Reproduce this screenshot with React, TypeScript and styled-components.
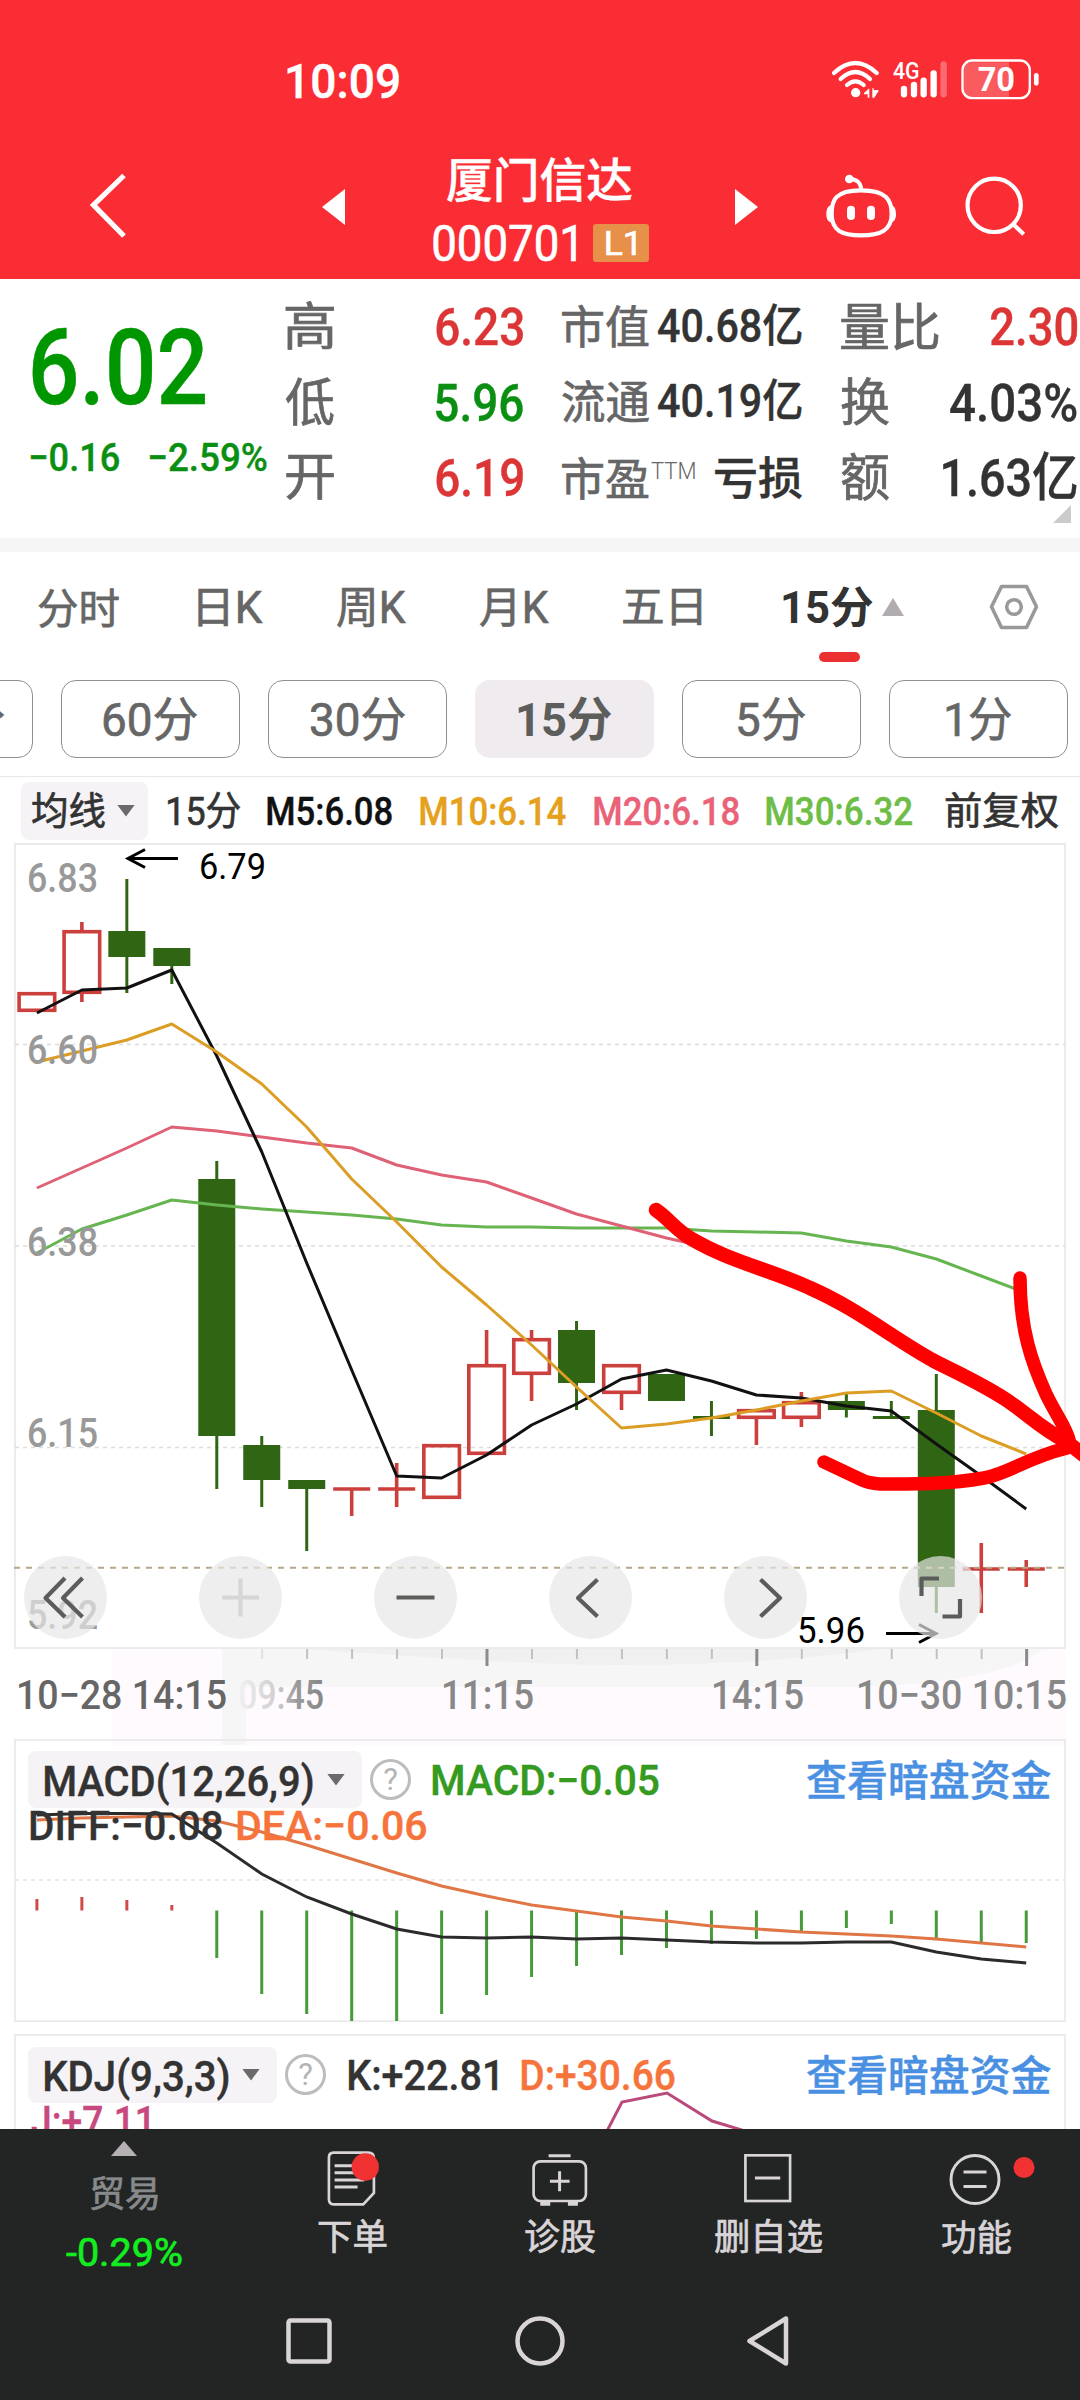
import React, { useLayoutEffect, useRef, useState } from 'react';
import styled, { createGlobalStyle } from 'styled-components';

const FONT = `Roboto, 'Noto Sans CJK SC', 'Noto Sans', sans-serif`;
const CAP = 0.711;

const Global = createGlobalStyle`
  * { box-sizing: border-box; }
  html, body { margin: 0; padding: 0; background: #fff; }
  body { font-family: ${FONT}; }
  button { font-family: ${FONT}; }
  svg { display: block; flex: none; }
  svg text { font-family: ${FONT}; }
`;

/* ---------- condensed text ---------- */

type TextProps = {
  children: string;
  w: number;
  h: number;
  size?: number;
  weight?: number;
  color?: string;
  ml?: number;
  mt?: number;
};

const TextBox = styled.span<{ $w: number; $h: number; $ml: number; $mt: number }>`
  display: block;
  flex: none;
  width: ${p => p.$w}px;
  height: ${p => p.$h}px;
  margin-left: ${p => p.$ml}px;
  margin-top: ${p => p.$mt}px;
`;

const TextInk = styled.span<{ $size: number; $h: number; $weight: number; $color: string }>`
  display: inline-block;
  white-space: pre;
  font-size: ${p => p.$size}px;
  line-height: ${p => p.$h}px;
  height: ${p => p.$h}px;
  font-weight: ${p => p.$weight};
  color: ${p => p.$color};
  -webkit-text-stroke: ${p => (p.$weight === 400 ? 0.7 : p.$weight === 500 ? 0.4 : 0)}px ${p => p.$color};
  transform-origin: 0 0;
`;

/* Without a size, h is the cap height and the baseline sits on the box's lower edge. */
function Text({ children, w, h, size, weight = 500, color = '#333', ml = 0, mt = 0 }: TextProps) {
  const ref = useRef<HTMLSpanElement>(null);
  const [transform, setTransform] = useState('none');
  const fontSize = size ?? h / CAP;
  useLayoutEffect(() => {
    const ctx = document.createElement('canvas').getContext('2d');
    if (!ctx || !ref.current) return;
    ctx.font = `${weight} ${fontSize}px ${FONT}`;
    const m = ctx.measureText(children);
    const sx = w / (m.actualBoundingBoxLeft + m.actualBoundingBoxRight);
    const baseline = h / 2 + (m.fontBoundingBoxAscent - m.fontBoundingBoxDescent) / 2;
    const inkH = m.actualBoundingBoxAscent + m.actualBoundingBoxDescent;
    const target = size ? (h - inkH) / 2 + m.actualBoundingBoxAscent : h;
    setTransform(`translate(${m.actualBoundingBoxLeft * sx}px, ${target - baseline}px) scaleX(${sx})`);
  }, [children, w, h, fontSize, weight, size]);
  return (
    <TextBox $w={w} $h={h} $ml={ml} $mt={mt}>
      <TextInk ref={ref} $size={fontSize} $h={h} $weight={weight} $color={color} style={{ transform }}>
        {children}
      </TextInk>
    </TextBox>
  );
}

/* ---------- layout parts ---------- */

const Screen = styled.div`
  width: 1080px;
  height: 2400px;
  overflow: hidden;
  background: #fff;
  display: flex;
  flex-direction: column;
`;

const Header = styled.header`
  flex: none;
  height: 279px;
  background: #f92d33;
`;

const StatusBar = styled.div`
  height: 152px;
  padding: 59px 41px 0 287px;
  display: flex;
  justify-content: space-between;
  align-items: flex-start;
`;

const TitleBar = styled.div`
  height: 108px;
  padding-left: 90px;
  display: flex;
  align-items: center;
`;

const TitleBlock = styled.div`
  width: 216px;
  height: 105px;
  margin: 7px 86px 0 88px;
  display: flex;
  flex-direction: column;
  justify-content: space-between;
`;

const CodeRow = styled.div`
  display: flex;
  align-items: center;
  justify-content: space-between;
`;

const LevelBadge = styled.span`
  width: 56px;
  height: 38px;
  border-radius: 3px;
  background: #e6904a;
  display: flex;
  align-items: center;
  justify-content: center;
`;

const Arrow = styled.span<{ $dir: 'left' | 'right' | 'up' | 'down'; $w: number; $h: number; $color: string; $ml?: number; $mt?: number }>`
  flex: none;
  width: ${p => p.$w}px;
  height: ${p => p.$h}px;
  margin-left: ${p => p.$ml ?? 0}px;
  margin-top: ${p => p.$mt ?? 0}px;
  background: ${p => p.$color};
  clip-path: ${p =>
    ({
      left: 'polygon(0 50%, 100% 0, 100% 100%)',
      right: 'polygon(0 0, 100% 50%, 0 100%)',
      up: 'polygon(50% 0, 100% 100%, 0 100%)',
      down: 'polygon(0 0, 100% 0, 50% 100%)',
    })[p.$dir]};
`;

const Quote = styled.section`
  flex: none;
  position: relative;
  height: 259px;
  display: flex;
`;

const PriceBlock = styled.div`
  width: 286px;
  padding: 50px 0 0 32px;
`;

const ChangeRow = styled.div`
  display: flex;
  justify-content: space-between;
  width: 236px;
  margin: 39px 0 0 -1px;
`;

const Stats = styled.div`
  padding-top: 9px;
  display: grid;
  grid-template-columns: 237px 240px 236px;
  grid-template-rows: repeat(3, 75.7px);
  column-gap: 39px;
`;

const Stat = styled.div`
  display: flex;
  align-items: center;
  justify-content: space-between;
`;

const StatName = styled.span`
  display: flex;
`;

const Corner = styled.span`
  position: absolute;
  right: 9px;
  bottom: 15px;
  width: 18px;
  height: 18px;
  background: #cbcbcb;
  clip-path: polygon(100% 0, 100% 100%, 0 100%);
`;

const Divider = styled.div`
  flex: none;
  height: 14px;
  background: #f6f6f6;
`;

const Tabs = styled.nav`
  flex: none;
  height: 110px;
  padding-left: 38px;
  display: flex;
  align-items: center;
  gap: 74px;
`;

const ActiveTab = styled.div`
  position: relative;
  display: flex;
  align-items: center;
  margin-left: 8px;
  &::after {
    content: '';
    position: absolute;
    left: 36px;
    top: 60px;
    width: 41px;
    height: 10px;
    border-radius: 5px;
    background: #ec3030;
  }
`;

const Periods = styled.div`
  flex: none;
  margin-top: 18px;
  height: 78px;
  display: flex;
  gap: 28px;
  overflow: hidden;
`;

const Period = styled.button<{ $active?: boolean; $first?: boolean }>`
  flex: none;
  width: 179px;
  height: 78px;
  padding: 0;
  margin-left: ${p => (p.$first ? -146 : 0)}px;
  border: ${p => (p.$active ? 'none' : '1px solid #8f8f8f')};
  border-radius: 15px;
  background: ${p => (p.$active ? '#efebef' : '#fff')};
  display: flex;
  align-items: center;
  justify-content: center;
`;

const Legend = styled.div`
  flex: none;
  margin-top: 18px;
  height: 68px;
  border-top: 1px solid #e8e8e8;
  padding-left: 21px;
  display: flex;
  align-items: center;
`;

const Chip = styled.div<{ $w: number; $h: number; $pad: number }>`
  flex: none;
  width: ${p => p.$w}px;
  height: ${p => p.$h}px;
  padding-left: ${p => p.$pad}px;
  border-radius: 8px;
  background: #f6f3f7;
  display: flex;
  align-items: center;
`;

const ChartArea = styled.section`
  flex: none;
  position: relative;
  height: 895px;
  svg { overflow: visible; }
`;

const Controls = styled.div`
  position: absolute;
  left: 24px;
  top: 712px;
  width: 958px;
  display: flex;
  justify-content: space-between;
`;

const RoundButton = styled.button`
  width: 83px;
  height: 83px;
  padding: 0;
  border: none;
  border-radius: 50%;
  background: rgba(231, 231, 231, 0.69);
  display: flex;
  align-items: center;
  justify-content: center;
`;

const Overlay = styled.svg`
  position: absolute;
  left: 0;
  top: 0;
`;

const Panel = styled.section<{ $h: number; $gap?: number }>`
  flex: none;
  position: relative;
  height: ${p => p.$h}px;
  margin-top: ${p => p.$gap ?? 0}px;
  overflow: hidden;
`;

const PanelHead = styled.div`
  position: relative;
  display: flex;
  align-items: center;
  height: 55px;
  margin: 13px 29px 0 28px;
`;

const Help = styled.span`
  flex: none;
  width: 41px;
  height: 41px;
  margin-left: 8px;
  border: 3px solid #bdbdbd;
  border-radius: 50%;
  color: #b4b4b4;
  font-size: 31px;
  line-height: 36px;
  text-align: center;
`;

const PanelLink = styled.a`
  margin-left: auto;
`;

const PanelSub = styled.div<{ $pad: number }>`
  position: relative;
  display: flex;
  gap: 16px;
  padding: 4px 0 0 ${p => p.$pad}px;
`;

const BottomBar = styled.footer`
  flex: none;
  height: 271px;
  background: #222523;
`;

const NavRow = styled.nav`
  height: 157px;
  display: grid;
  grid-template-columns: 248px 208px 208px 208px 208px;
`;

const NavItem = styled.div`
  position: relative;
  display: flex;
  flex-direction: column;
  align-items: center;
  padding-top: 22px;
`;

const IndexItem = styled(NavItem)`
  padding-top: 12px;
`;

const IconSlot = styled.div`
  height: 58px;
  margin-bottom: 11px;
`;

const SystemRow = styled.div`
  display: flex;
  align-items: center;
  height: 110px;
  padding-left: 286px;
`;

/* ---------- chart data ---------- */

const X0 = 36.9;
const STEP = 44.97;
const cx = (i: number) => X0 + STEP * i;
const path = (ys: number[]) => ys.map((y, i) => `${i ? 'L' : 'M'}${cx(i).toFixed(1)} ${y}`).join('');

type Candle = [up: boolean, high: number, top: number, bottom: number, low: number];
const candles: Candle[] = [
  [true, 992, 992, 1012, 1012],
  [true, 922, 930, 994, 1002],
  [false, 879, 931, 957, 993],
  [false, 948, 948, 966, 984],
  [false, 1161, 1179, 1436, 1489],
  [false, 1436, 1445, 1480, 1507],
  [false, 1480, 1480, 1489, 1551],
  [true, 1489, 1489, 1489, 1516],
  [true, 1463, 1489, 1489, 1507],
  [true, 1444, 1444, 1499, 1499],
  [true, 1330, 1364, 1455, 1455],
  [true, 1330, 1338, 1375, 1401],
  [false, 1321, 1330, 1383, 1410],
  [true, 1364, 1364, 1394, 1410],
  [false, 1374, 1374, 1401, 1401],
  [false, 1401, 1417.5, 1417.5, 1436],
  [true, 1409, 1409, 1419, 1445],
  [true, 1392, 1401, 1419, 1427],
  [false, 1394, 1401, 1410, 1417.5],
  [false, 1401, 1417.5, 1417.5, 1417.5],
  [false, 1374, 1410, 1587, 1613],
  [true, 1543, 1569, 1569, 1613],
  [true, 1560, 1569, 1569, 1587],
];

const averages = [
  { color: '#66b550', ys: [1253, 1229, 1215, 1200, 1205, 1209, 1212, 1215, 1219, 1225, 1227, 1227, 1228, 1228, 1228, 1231, 1232, 1233, 1241, 1247, 1259, 1276, 1293] },
  { color: '#df6175', ys: [1188, 1168, 1148, 1127, 1131, 1137, 1143, 1148, 1165, 1175, 1182, 1198, 1214, 1226, 1238, 1248, 1267, 1289, 1305] },
  { color: '#111111', ys: [1013, 990, 988, 970, 1056, 1152, 1263, 1370, 1476, 1478, 1455, 1425, 1404, 1379, 1370, 1381, 1395, 1398, 1406, 1411, 1444, 1476, 1509] },
  { color: '#dc9d24', ys: [1062, 1051, 1040, 1024, 1052, 1084, 1127, 1179, 1222, 1267, 1305, 1345, 1387, 1428, 1424, 1418, 1410, 1401, 1393, 1391, 1413, 1436, 1454] },
];

const macdBars = [1899, 1897, 1900, 1905, 1958, 1994, 2014, 2021, 2021, 2014, 1995, 1977, 1966, 1955, 1948, 1944, 1939, 1931, 1928, 1924, 1939, 1942, 1943];
const diff = [1815, 1813.5, 1813.5, 1814, 1843, 1874, 1897, 1914, 1929, 1937, 1938, 1937, 1939, 1938, 1940, 1942, 1943, 1943, 1942, 1942, 1952, 1959, 1963];
const dea = [1820, 1818, 1817, 1816, 1821, 1832, 1845, 1859, 1873, 1886, 1896, 1905, 1911, 1917, 1921, 1926, 1929, 1932, 1934, 1936, 1939, 1943, 1947];

const RED = '#cb3f3c';
const GREEN = '#306613';

function CandleMark({ i, c }: { i: number; c: Candle }) {
  const [up, high, top, bottom, low] = c;
  const x = cx(i);
  const color = up ? RED : GREEN;
  const flat = top === bottom;
  return (
    <g stroke={color} strokeWidth={up ? 3.6 : 3} fill="none">
      {high < top && <path d={`M${x} ${high}V${top}`} />}
      {low > bottom && <path d={`M${x} ${bottom}V${low}`} />}
      {flat && <path d={`M${x - 18.5} ${top}H${x + 18.5}`} />}
      {!flat && up && <rect x={x - 17.8} y={top + 1.7} width={35.6} height={bottom - top - 3.4} />}
      {!flat && !up && <rect x={x - 18.5} y={top} width={37} height={bottom - top} fill={color} stroke="none" />}
    </g>
  );
}

type LabelProps = { x: number; y: number; w: number; size: number; fill: string; weight?: number; children: string };
function Label({ x, y, w, size, fill, weight = 400, children }: LabelProps) {
  return (
    <text x={x} y={y} fontSize={size} fontWeight={weight} fill={fill} textLength={w} lengthAdjust="spacingAndGlyphs">
      {children}
    </text>
  );
}

function MainChart() {
  return (
    <svg width="1080" height="906" viewBox="0 844 1080 906">
      <defs>
        <linearGradient id="timeFade" x1="240" x2="322" y1="0" y2="0" gradientUnits="userSpaceOnUse">
          <stop offset="0" stopColor="#f0f0f0" />
          <stop offset="0.45" stopColor="#cfcdcf" />
          <stop offset="0.7" stopColor="#999" />
          <stop offset="1" stopColor="#888" />
        </linearGradient>
      </defs>
      <rect x="112" y="1649" width="953" height="97" fill="#fefafe" />
      <path d="M222 1649H1042C1022 1668 960 1687 830 1687H246V1745H222Z" fill="#f6f6f6" />
      <path d="M300 1649H880C800 1660 690 1668 560 1664C460 1660 380 1654 300 1649Z" fill="#f1f0f1" />
      <path d="M15 844V1648H1065V844Z" fill="#fff" stroke="#ebebeb" strokeWidth="2" />
      <g stroke="#dcdcdc" strokeWidth="1.4" strokeDasharray="4 4">
        <path d="M15 1044.5H1065M15 1246H1065M15 1447.5H1065" />
      </g>
      {candles.map((c, i) => (
        <CandleMark key={i} i={i} c={c} />
      ))}
      <path d="M14 1567.8H1065" stroke="#b6a886" strokeWidth="2" strokeDasharray="6 6" />
      {averages.map(a => (
        <path key={a.color} d={path(a.ys)} stroke={a.color} strokeWidth="3" fill="none" strokeLinejoin="round" />
      ))}
      <Label x={27} y={892} w={71} size={40} fill="#999" weight={500}>6.83</Label>
      <Label x={27} y={1064} w={71} size={40} fill="#999" weight={500}>6.60</Label>
      <Label x={27} y={1256} w={71} size={40} fill="#999" weight={500}>6.38</Label>
      <Label x={27} y={1447} w={71} size={40} fill="#999" weight={500}>6.15</Label>
      <Label x={27} y={1629} w={71} size={40} fill="#999" weight={500}>5.92</Label>
      <Label x={199} y={879} w={67} size={36.5} fill="#000">6.79</Label>
      <Label x={797} y={1643} w={68} size={36.5} fill="#000">5.96</Label>
      <path d="M178 858.5H128M145 849.5L128 858.5L145 867.5M886 1633.5H936M919 1624.5L936 1633.5L919 1642.5" stroke="#000" strokeWidth="3" fill="none" />
      {candles.slice(5).map((_, k) => {
        const i = k + 5;
        const major = i === 10 || i === 16 || i === 22;
        return <path key={i} d={`M${cx(i) + 0.4} 1649V${major ? 1666 : 1659}`} stroke={major ? '#8a8a8a' : i === 5 ? '#e0e0e0' : '#c2c0c2'} strokeWidth={major ? 3 : 2} />;
      })}
      <Label x={16} y={1709} w={211} size={40} fill="#666" weight={500}>10−28 14:15</Label>
      <Label x={238} y={1709} w={86} size={40} fill="url(#timeFade)" weight={500}>09:45</Label>
      <Label x={441} y={1709} w={93} size={40} fill="#888" weight={500}>11:15</Label>
      <Label x={711} y={1709} w={93} size={40} fill="#888" weight={500}>14:15</Label>
      <Label x={856} y={1709} w={211} size={40} fill="#888" weight={500}>10−30 10:15</Label>
    </svg>
  );
}

function Stroke() {
  return (
    <Overlay width="1080" height="895" viewBox="0 844 1080 895">
      <g fill="none" stroke="#ff0000" strokeWidth="13.5" strokeLinecap="round" strokeLinejoin="round">
        <path d="M656 1210C668 1218 676 1230 690 1238C730 1262 772 1270 810 1288C860 1310 895 1340 936 1362C960 1374 982 1384 1005 1399C1028 1414 1040 1428 1067 1442L1086 1457" strokeWidth="14.5" />
        <path d="M1020 1278C1020 1330 1032 1363 1046 1394C1056 1415 1066 1427 1069 1440" />
        <path d="M824 1462L862 1480Q868 1483 880 1484C920 1484 950 1484 984 1478C1010 1473 1026 1458 1067 1448" />
      </g>
    </Overlay>
  );
}

const ControlGlyph = ({ d, color = '#5c5d5b' }: { d: string; color?: string }) => (
  <svg width="83" height="83" viewBox="0 0 83 83">
    <path d={d} fill="none" stroke={color} strokeWidth="4.2" strokeLinejoin="round" />
  </svg>
);

const glyphs = [
  { d: 'M41 22L21.5 42L41 61M58.5 22L39 42L58.5 61' },
  { d: 'M23 41.5H60M41.5 22.5V60.5', color: '#d6d6d6' },
  { d: 'M22.5 41.5H60.5' },
  { d: 'M48.5 23.5L29 42L48.5 60.5' },
  { d: 'M36.5 23.5L56 42L36.5 60.5' },
  { d: 'M40 22.5H22.5V40M43.5 60.5H61V43' },
];

export default function App() {
  return (
    <>
      <Global />
      <Screen>
        <Header>
          <StatusBar>
            <Text w={112} h={34} mt={5} color="#fff" weight={500}>10:09</Text>
            <svg width="207.3" height="40.7" viewBox="96 56 622 122">
              <g fill="none" stroke="#fff" strokeWidth="12.5" strokeLinecap="round">
                <path d="M102 98Q166 38 230 98" />
                <path d="M122 116Q166 74 210 116" />
                <path d="M141 134Q166 112 191 134" />
              </g>
              <circle cx="167" cy="157" r="14" fill="#fff" />
              <path d="M192 158L208 144V172H203V162H192ZM217 144H221V149L237 150L223 172H217Z" fill="#fff" />
              <text x="279" y="116" fontSize="73" fontWeight="500" fill="#fff" textLength="80" lengthAdjust="spacingAndGlyphs">4G</text>
              <g stroke="#fff" strokeWidth="19" strokeLinecap="round">
                <path d="M312 146V162M342 134V162M371 121V162M401 99V162" />
                <path d="M431 72V162" opacity="0.3" />
              </g>
              <path d="M627 66H514Q490 66 490 90V146Q490 170 514 170H627Z" fill="#fff" opacity="0.22" />
              <rect x="487.5" y="60.5" width="202" height="113" rx="29" fill="none" stroke="#fff" strokeWidth="7" />
              <rect x="702" y="98" width="14" height="38" rx="7" fill="#fff" />
              <text x="533" y="153" fontSize="101" fontWeight="700" fill="#fff" textLength="112" lengthAdjust="spacingAndGlyphs">70</text>
            </svg>
          </StatusBar>
          <TitleBar>
            <svg width="38" height="66" viewBox="0 0 38 66">
              <path d="M34 2.5L3.5 32L34 63" fill="none" stroke="#fff" strokeWidth="5.2" />
            </svg>
            <Arrow $dir="left" $w={23} $h={36} $color="#fff" $ml={194} $mt={2} />
            <TitleBlock>
              <Text w={185} h={44} size={47} ml={14} mt={1} color="#fff" weight={500}>厦门信达</Text>
              <CodeRow>
                <Text w={143} h={35} color="#fff" weight={400}>000701</Text>
                <LevelBadge>
                  <Text w={30} h={23} color="#fff" weight={400}>L1</Text>
                </LevelBadge>
              </CodeRow>
            </TitleBlock>
            <Arrow $dir="right" $w={23} $h={36} $color="#fff" $mt={2} />
            <svg width="138" height="64" viewBox="-126 400 414 192">
              <g fill="none" stroke="#fff" strokeWidth="12.5">
                <path d="M183 449C262 449 275 480 275 520C275 570 240 584 183 584C126 584 95 570 95 520C95 480 104 449 183 449Z" />
                <path d="M184 448C182 425 172 416 150 415" />
              </g>
              <circle cx="148" cy="415" r="13" fill="#fff" />
              <path d="M96 493C86 494 79 502 79 520S86 545 97 546ZM271 493C281 494 288 502 288 520S281 545 270 546Z" fill="#fff" />
              <rect x="141" y="495" width="24" height="43" rx="12" fill="#fff" />
              <rect x="201" y="495" width="24" height="43" rx="12" fill="#fff" />
            </svg>
            <svg width="129.7" height="60.7" viewBox="289 408 389 182">
              <circle cx="583.5" cy="496" r="80" fill="none" stroke="#fff" strokeWidth="12.5" />
              <path d="M638 550L672 583" stroke="#fff" strokeWidth="12.5" />
            </svg>
          </TitleBar>
        </Header>

        <Quote>
          <PriceBlock>
            <Text w={173} h={75} color="#009600" weight={500}>6.02</Text>
            <ChangeRow>
              <Text w={88} h={28} color="#0b8f12" weight={500}>−0.16</Text>
              <Text w={117} h={28} color="#0b8f12" weight={500}>−2.59%</Text>
            </ChangeRow>
          </PriceBlock>
          <Stats>
            <Stat>
              <Text w={48} h={48} size={51} weight={400} color="#666">高</Text>
              <Text w={87} h={37} mt={1} color="#dc3535">6.23</Text>
            </Stat>
            <Stat>
              <Text w={87} h={43} size={45} weight={400} color="#666">市值</Text>
              <Text w={144} h={32.5}>40.68亿</Text>
            </Stat>
            <Stat>
              <Text w={98} h={46} size={51} weight={400} color="#666">量比</Text>
              <Text w={86} h={37} mt={1} color="#dc3535">2.30</Text>
            </Stat>
            <Stat>
              <Text w={48} h={48} size={51} weight={400} color="#666">低</Text>
              <Text w={87} h={37} mt={1} color="#0b8f12">5.96</Text>
            </Stat>
            <Stat>
              <Text w={87} h={43} size={45} weight={400} color="#666">流通</Text>
              <Text w={144} h={32.5}>40.19亿</Text>
            </Stat>
            <Stat>
              <Text w={48} h={48} size={51} weight={400} color="#666">换</Text>
              <Text w={127} h={37} mt={1}>4.03%</Text>
            </Stat>
            <Stat>
              <Text w={48} h={45} size={51} weight={400} color="#666">开</Text>
              <Text w={87} h={37} mt={1} color="#dc3535">6.19</Text>
            </Stat>
            <Stat>
              <StatName>
                <Text w={87} h={43} size={45} weight={400} color="#666">市盈</Text>
                <Text w={44} h={17} ml={2} mt={6} weight={300} color="#666">TTM</Text>
              </StatName>
              <Text w={87} h={43} size={45} weight={500}>亏损</Text>
            </Stat>
            <Stat>
              <Text w={48} h={48} size={51} weight={400} color="#666">额</Text>
              <Text w={134} h={37} mt={1}>1.63亿</Text>
            </Stat>
          </Stats>
          <Corner />
        </Quote>
        <Divider />

        <Tabs>
          <Text w={81} h={39} size={42} weight={400} color="#666">分时</Text>
          <Text w={65} h={31} ml={5} weight={400} color="#666">日K</Text>
          <Text w={69} h={31} weight={400} color="#666">周K</Text>
          <Text w={69} h={31} weight={400} color="#666">月K</Text>
          <Text w={78} h={37} size={42} weight={400} color="#666">五日</Text>
          <ActiveTab>
            <Text w={90} h={31} weight={700}>15分</Text>
            <Arrow $dir="up" $w={22} $h={18} $ml={9} $color="#b0acb0" />
          </ActiveTab>
          <svg width="60" height="46" viewBox="-12 0 60 46">
            <path d="M11.5 2.5H36.5L46.5 22.8L36.5 43.5H11.5L1.5 22.8Z" fill="none" stroke="#999" strokeWidth="3.6" strokeLinejoin="round" />
            <circle cx="24" cy="23" r="7.3" fill="none" stroke="#999" strokeWidth="3.6" />
          </svg>
        </Tabs>

        <Periods>
          <Period $first><Text w={121} h={33} weight={400} color="#666">120分</Text></Period>
          <Period><Text w={93} h={33} weight={400} color="#666">60分</Text></Period>
          <Period><Text w={94} h={33} weight={400} color="#666">30分</Text></Period>
          <Period $active><Text w={94} h={33} weight={700} color="#5d5d5b">15分</Text></Period>
          <Period><Text w={67} h={33} weight={400} color="#666">5分</Text></Period>
          <Period><Text w={65} h={33} weight={400} color="#666">1分</Text></Period>
        </Periods>

        <Legend>
          <Chip $w={127} $h={58} $pad={11}>
            <Text w={73} h={35} size={38} weight={400}>均线</Text>
            <Arrow $dir="down" $w={18} $h={12} $ml={12} $color="#6a6a6a" />
          </Chip>
          <Text w={72} h={28} ml={20} weight={400}>15分</Text>
          <Text w={125} h={28} ml={27} weight={500} color="#111">M5:6.08</Text>
          <Text w={146} h={28} ml={28} weight={500} color="#e5a11c">M10:6.14</Text>
          <Text w={145} h={28} ml={28} weight={500} color="#ea6278">M20:6.18</Text>
          <Text w={146} h={28} ml={27} weight={500} color="#6ebd47">M30:6.32</Text>
          <Text w={112} h={35} size={38} ml={34} weight={400}>前复权</Text>
        </Legend>

        <ChartArea>
          <MainChart />
          <Controls>
            {glyphs.map(g => (
              <RoundButton key={g.d}>
                <ControlGlyph {...g} />
              </RoundButton>
            ))}
          </Controls>
          <Stroke />
        </ChartArea>

        <Panel $h={283}>
          <Overlay width="1080" height="283" viewBox="0 1739 1080 283">
            <rect x="15" y="1739.8" width="1050" height="281.5" fill="none" stroke="#ebebeb" strokeWidth="2" />
            <path d="M15 1880H1065" stroke="#e6e6e6" strokeWidth="1.6" strokeDasharray="4 4" />
            {macdBars.map((y, i) => (
              <path key={i} d={`M${cx(i)} 1910.5V${y}`} stroke={i < 4 ? '#d04a48' : '#459b38'} strokeWidth="3" />
            ))}
            <path d={path(dea)} fill="none" stroke="#e07645" strokeWidth="3" />
            <path d={path(diff)} fill="none" stroke="#2b2b2b" strokeWidth="3" />
          </Overlay>
          <PanelHead>
            <Chip $w={334} $h={57} $pad={17}>
              <Text w={268} h={30} mt={3} weight={500}>MACD(12,26,9)</Text>
              <Arrow $dir="down" $w={18} $h={12} $ml={14} $color="#6a6a6a" />
            </Chip>
            <Help>?</Help>
            <Text w={226} h={30} ml={22} weight={500} color="#349a20">MACD:−0.05</Text>
            <PanelLink>
              <Text w={244} h={38} size={41.5} weight={500} color="#4a90e2">查看暗盘资金</Text>
            </PanelLink>
          </PanelHead>
          <PanelSub $pad={31}>
            <Text w={191} h={29.5} weight={500}>DIFF:−0.08</Text>
            <Text w={188} h={29.5} weight={500} color="#f6743c">DEA:−0.06</Text>
          </PanelSub>
        </Panel>

        <Panel $h={95} $gap={12}>
          <Overlay width="1080" height="95" viewBox="0 2034 1080 95">
            <rect x="15" y="2035" width="1050" height="200" fill="none" stroke="#ebebeb" strokeWidth="2" />
            <path d="M607 2131L622 2102L667 2093L712 2121L745 2131" fill="none" stroke="#b94a7b" strokeWidth="3" />
          </Overlay>
          <PanelHead>
            <Chip $w={249} $h={56} $pad={17}>
              <Text w={184} h={30} mt={3} weight={500}>KDJ(9,3,3)</Text>
              <Arrow $dir="down" $w={18} $h={12} $ml={13} $color="#6a6a6a" />
            </Chip>
            <Help>?</Help>
            <Text w={148} h={30} ml={23} weight={500}>K:+22.81</Text>
            <Text w={153} h={30} ml={25} weight={500} color="#f6743c">D:+30.66</Text>
            <PanelLink>
              <Text w={244} h={38} size={41.5} weight={500} color="#4a90e2">查看暗盘资金</Text>
            </PanelLink>
          </PanelHead>
          <PanelSub $pad={31}>
            <Text w={118} h={30} weight={500} color="#c8497f">J:+7.11</Text>
          </PanelSub>
        </Panel>

        <BottomBar>
          <NavRow>
            <IndexItem>
              <Arrow $dir="up" $w={26} $h={15} $color="#b4b0b4" />
              <Text w={67} h={34} size={36} mt={20} weight={400} color="#878a8c">贸易</Text>
              <Text w={116} h={27} mt={29} weight={400} color="#12ee20">-0.29%</Text>
            </IndexItem>
            <NavItem>
              <IconSlot>
                <svg width="57" height="56" viewBox="132 66 165.5 168">
                  <path d="M158 71H262Q279 71 279 88V192L247 226H158Q144 226 144 210V86Q144 71 158 71Z" fill="none" stroke="#d8d4d8" strokeWidth="8" />
                  <path d="M161 110H240M161 131H240M161 153H250M161 174H230" stroke="#d8d4d8" strokeWidth="9" />
                  <circle cx="253" cy="114" r="41" fill="#f03232" />
                </svg>
              </IconSlot>
              <Text w={69} h={33} size={36} weight={400} color="#d8d4d8">下单</Text>
            </NavItem>
            <NavItem>
              <IconSlot>
                <svg width="57" height="56" viewBox="731 66 165.5 168">
                  <rect x="733" y="97" width="157" height="119" rx="20" fill="none" stroke="#d8d4d8" strokeWidth="8" />
                  <path d="M778 80H844M782 157H841M811 127V187" stroke="#d8d4d8" strokeWidth="9" />
                  <path d="M753 216H783V230H753ZM836 216H866V230H836Z" fill="#d8d4d8" />
                </svg>
              </IconSlot>
              <Text w={70} h={33} size={36} weight={400} color="#d8d4d8">诊股</Text>
            </NavItem>
            <NavItem>
              <IconSlot>
                <svg width="57" height="56" viewBox="1334 66 165.5 168">
                  <rect x="1347.500" y="79" width="134" height="137" fill="none" stroke="#d8d4d8" strokeWidth="8" />
                  <path d="M1376 147H1452" stroke="#d8d4d8" strokeWidth="9" />
                </svg>
              </IconSlot>
              <Text w={107} h={33} size={36} weight={400} color="#d8d4d8">删自选</Text>
            </NavItem>
            <NavItem>
              <IconSlot>
                <svg width="120" height="58" viewBox="-59 -28.5 120 58">
                  <circle r="24" fill="none" stroke="#d8d4d8" strokeWidth="3" />
                  <path d="M-11.5 -7.5H11.5M-11.5 7H11.5" stroke="#d8d4d8" strokeWidth="3.2" />
                  <circle cx="49" cy="-12" r="10.5" fill="#f03232" />
                </svg>
              </IconSlot>
              <Text w={69} h={33} size={36} weight={400} color="#d8d4d8">功能</Text>
            </NavItem>
          </NavRow>
          <SystemRow>
            <svg width="46" height="46" viewBox="0 0 46 46">
              <rect x="2.5" y="2.5" width="41" height="41" rx="2" fill="none" stroke="#d8d4d8" strokeWidth="4.5" />
            </svg>
            <svg width="234" height="52" viewBox="-184 0 234 52">
              <circle cx="24" cy="26" r="22.5" fill="none" stroke="#d8d4d8" strokeWidth="4.5" />
            </svg>
            <svg width="225" height="52" viewBox="-179 0 225 52">
              <path d="M41 3.5V48.5L4.5 26Z" fill="none" stroke="#d8d4d8" strokeWidth="4.5" strokeLinejoin="round" />
            </svg>
          </SystemRow>
        </BottomBar>
      </Screen>
    </>
  );
}
